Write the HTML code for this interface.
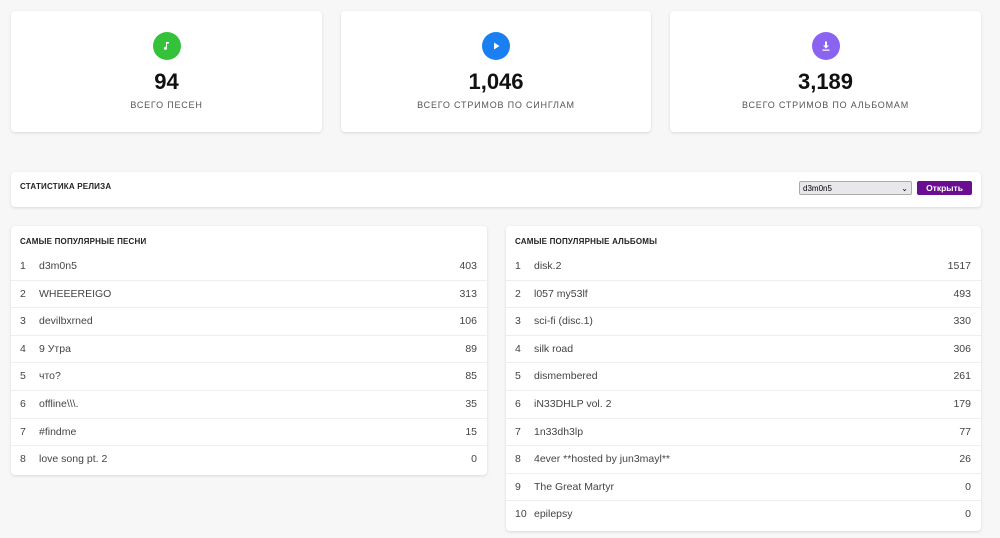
<!DOCTYPE html><html><head><meta charset="utf-8"><style>
body{margin:0;background:#f7f7f7;font-family:"Liberation Sans",sans-serif;width:1000px;height:538px;overflow:hidden;position:relative}
.c{position:absolute;background:#fff;border-radius:4px;box-shadow:0 1px 3px rgba(0,0,0,.12)}
.s{top:11px;height:121px;width:311px;text-align:center}
.ic{width:28px;height:28px;border-radius:50%;margin:21px auto 0;display:flex;align-items:center;justify-content:center}
.n{font-size:22px;color:#111;margin-top:10px;line-height:24px;font-weight:bold}
.l{font-size:9px;letter-spacing:.8px;color:#555;margin-top:6px}
.h{font-size:8px;font-weight:bold;color:#222;letter-spacing:.2px}
.row{position:absolute;left:0;right:0;height:27.6px;border-top:1px solid #eee;font-size:10.5px;color:#444;line-height:27px}
.row .i{position:absolute;left:9px}.row .t{position:absolute;left:28px}.row .v{position:absolute;right:10px}
</style></head><body>
<div class="c s" style="left:11px"><div class="ic" style="background:#34c23a"><svg width="12" height="12" viewBox="0 0 12 12"><path d="M6 2v6.2a1.6 1.6 0 1 1-1-1.4V2h3v1.5H6z" fill="#fff"/></svg></div><div class="n">94</div><div class="l">ВСЕГО ПЕСЕН</div></div>
<div class="c s" style="left:341px;width:310px"><div class="ic" style="background:#1a7ff0"><svg width="12" height="12" viewBox="0 0 12 12"><path d="M4 2.5L9.5 6 4 9.5z" fill="#fff"/></svg></div><div class="n">1,046</div><div class="l">ВСЕГО СТРИМОВ ПО СИНГЛАМ</div></div>
<div class="c s" style="left:670px"><div class="ic" style="background:#8a63f0"><svg width="12" height="12" viewBox="0 0 12 12"><path d="M5 1.5h2v4h2L6 8.5 3 5.5h2zM2.5 9.5h7v1.3h-7z" fill="#fff"/></svg></div><div class="n">3,189</div><div class="l">ВСЕГО СТРИМОВ ПО АЛЬБОМАМ</div></div>
<div class="c" style="left:11px;top:172px;width:970px;height:35px"><div class="h" style="position:absolute;left:9px;top:10px">СТАТИСТИКА РЕЛИЗА</div>
<div style="position:absolute;left:788px;top:9px;width:113px;border:1px solid #aaa;background:#e8e8ec;border-radius:2px;font-size:8px;line-height:13px;padding-left:3px;box-sizing:border-box;height:14px">d3m0n5<span style="position:absolute;right:3px">⌄</span></div>
<div style="position:absolute;left:906px;top:9px;width:55px;height:14px;background:#6a0d91;border-radius:2px;color:#fff;font-size:8.5px;font-weight:bold;text-align:center;line-height:14px">Открыть</div></div>
<div class="c" style="left:11px;top:226px;width:476px;height:249px"><div class="h" style="position:absolute;left:9px;top:11px">САМЫЕ ПОПУЛЯРНЫЕ ПЕСНИ</div>
<div class="row" style="top:27px;border:0"><span class="i">1</span><span class="t">d3m0n5</span><span class="v">403</span></div>
<div class="row" style="top:53.6px"><span class="i">2</span><span class="t">WHEEEREIGO</span><span class="v">313</span></div>
<div class="row" style="top:81.2px"><span class="i">3</span><span class="t">devilbxrned</span><span class="v">106</span></div>
<div class="row" style="top:108.8px"><span class="i">4</span><span class="t">9 Утра</span><span class="v">89</span></div>
<div class="row" style="top:136.4px"><span class="i">5</span><span class="t">что?</span><span class="v">85</span></div>
<div class="row" style="top:164px"><span class="i">6</span><span class="t">offline\\\.</span><span class="v">35</span></div>
<div class="row" style="top:191.6px"><span class="i">7</span><span class="t">#findme</span><span class="v">15</span></div>
<div class="row" style="top:219.2px"><span class="i">8</span><span class="t">love song pt. 2</span><span class="v">0</span></div></div>
<div class="c" style="left:506px;top:226px;width:475px;height:305px"><div class="h" style="position:absolute;left:9px;top:11px">САМЫЕ ПОПУЛЯРНЫЕ АЛЬБОМЫ</div>
<div class="row" style="top:27px;border:0"><span class="i">1</span><span class="t">disk.2</span><span class="v">1517</span></div>
<div class="row" style="top:53.6px"><span class="i">2</span><span class="t">l057 my53lf</span><span class="v">493</span></div>
<div class="row" style="top:81.2px"><span class="i">3</span><span class="t">sci-fi (disc.1)</span><span class="v">330</span></div>
<div class="row" style="top:108.8px"><span class="i">4</span><span class="t">silk road</span><span class="v">306</span></div>
<div class="row" style="top:136.4px"><span class="i">5</span><span class="t">dismembered</span><span class="v">261</span></div>
<div class="row" style="top:164px"><span class="i">6</span><span class="t">iN33DHLP vol. 2</span><span class="v">179</span></div>
<div class="row" style="top:191.6px"><span class="i">7</span><span class="t">1n33dh3lp</span><span class="v">77</span></div>
<div class="row" style="top:219.2px"><span class="i">8</span><span class="t">4ever **hosted by jun3mayl**</span><span class="v">26</span></div>
<div class="row" style="top:246.8px"><span class="i">9</span><span class="t">The Great Martyr</span><span class="v">0</span></div>
<div class="row" style="top:274.4px"><span class="i">10</span><span class="t">epilepsy</span><span class="v">0</span></div></div>
</body></html>
